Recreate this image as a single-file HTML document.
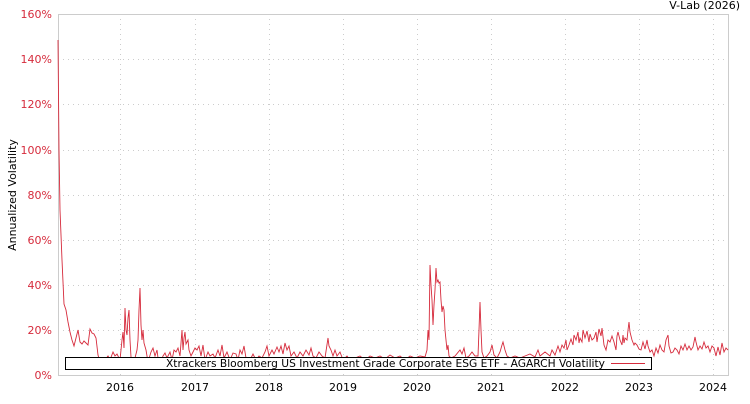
<!DOCTYPE html>
<html><head><style>
body{margin:0;background:#fff;width:750px;height:400px;overflow:hidden;font-family:"DejaVu Sans","Liberation Sans",sans-serif;}
</style></head><body>
<svg width="750" height="400" xmlns="http://www.w3.org/2000/svg" font-family="DejaVu Sans, Liberation Sans, sans-serif">
<text x="740" y="9" font-size="11" text-anchor="end" fill="#000">V-Lab (2026)</text>
<g stroke="#ccc" stroke-dasharray="1,4" stroke-width="1">
<line x1="58" x2="728" y1="59.5" y2="59.5"/><line x1="58" x2="728" y1="104.5" y2="104.5"/>
<line x1="58" x2="728" y1="150.5" y2="150.5"/><line x1="58" x2="728" y1="195.5" y2="195.5"/>
<line x1="58" x2="728" y1="240.5" y2="240.5"/><line x1="58" x2="728" y1="285.5" y2="285.5"/>
<line x1="58" x2="728" y1="330.5" y2="330.5"/>
<line x1="120.5" x2="120.5" y1="14" y2="375"/><line x1="195.5" x2="195.5" y1="14" y2="375"/>
<line x1="269.5" x2="269.5" y1="14" y2="375"/><line x1="343.5" x2="343.5" y1="14" y2="375"/>
<line x1="417.5" x2="417.5" y1="14" y2="375"/><line x1="491.5" x2="491.5" y1="14" y2="375"/>
<line x1="565.5" x2="565.5" y1="14" y2="375"/><line x1="639.5" x2="639.5" y1="14" y2="375"/>
<line x1="713.5" x2="713.5" y1="14" y2="375"/>
</g>
<rect x="58.5" y="14.5" width="670" height="361" fill="none" stroke="#ccc"/>
<g fill="#d62b3c" font-size="11" text-anchor="end">
<text x="52" y="18">160%</text><text x="52" y="63">140%</text><text x="52" y="108">120%</text>
<text x="52" y="154">100%</text><text x="52" y="199">80%</text><text x="52" y="244">60%</text>
<text x="52" y="289">40%</text><text x="52" y="334">20%</text><text x="52" y="379">0%</text>
</g>
<g fill="#000" font-size="11" text-anchor="middle">
<text x="120" y="391">2016</text><text x="195" y="391">2017</text><text x="269" y="391">2018</text>
<text x="343" y="391">2019</text><text x="417" y="391">2020</text><text x="491" y="391">2021</text>
<text x="565" y="391">2022</text><text x="639" y="391">2023</text><text x="713" y="391">2024</text>
</g>
<text transform="translate(16,195) rotate(-90)" font-size="11" text-anchor="middle" fill="#000">Annualized Volatility</text>
<polyline fill="none" stroke="#d62b3c" stroke-width="0.9" points="
58,40 59,150 60,210 61,235 62,260 64,304 66,310 68,322 70,332 72,340 74,346 76,338 78,330 80,342 82,344 84,341 86,343 88,345 90,329 92,333 94,334 96,338 98,355 100,362 105,360 108,356 110,360 113,352 115,356 117,354 120,360 122,340 123,332 124,348 125,308 126,330 127,335 128,318 129,310 130,340 131,357 134,362 137,350 138,340 139,310 140,288 141,325 142,340 143,330 144,343 146,350 148,362 151,352 153,348 155,356 157,350 158,358 160,364 163,356 165,353 167,358 170,352 172,360 174,350 176,352 178,348 180,356 182,330 183,350 184,338 185,332 186,344 188,340 189,350 191,356 193,352 195,348 197,350 199,346 201,356 203,345 205,360 208,352 210,356 213,354 215,358 218,350 220,356 222,345 224,358 227,352 230,360 233,353 236,354 238,360 240,350 242,354 244,346 246,358 250,360 253,354 256,360 259,356 262,358 265,352 267,346 269,356 272,350 274,354 277,347 279,352 281,346 283,354 285,343 287,350 289,346 291,356 294,352 297,358 300,352 303,356 306,350 309,355 311,348 313,356 316,358 319,352 322,356 325,358 328,338 329,346 331,350 333,356 335,350 337,356 340,352 343,360 347,356 350,360 355,358 360,356 365,360 370,356 375,358 380,356 385,359 390,355 395,358 400,356 405,360 410,356 415,358 420,356 425,357 427,350 428,330 429,340 430,265 431,285 432,300 433,325 434,305 435,290 436,268 437,282 438,280 439,283 440,282 441,300 442,312 443,306 444,310 445,330 446,340 447,350 448,345 449,356 451,358 455,356 460,350 462,354 464,348 466,358 469,356 472,352 475,356 478,356 479,330 480,302 481,330 482,352 484,358 487,356 490,352 492,345 494,355 497,358 500,352 502,345 503,342 505,350 507,356 510,358 515,356 520,358 525,356 530,354 535,357 538,350 540,356 545,352 550,356 552,350 555,355 558,346 560,352 562,345 564,348 566,340 567,350 569,345 571,339 573,345 574,335 576,340 578,332 579,343 580,338 582,342 583,330 585,338 587,331 589,342 590,334 592,340 594,338 596,332 597,342 599,329 601,336 602,328 604,345 606,350 608,340 610,342 612,336 614,342 616,350 617,336 618,332 620,340 622,345 623,335 624,343 625,338 627,340 628,330 629,322 630,332 632,340 634,345 635,343 637,345 639,349 641,350 643,342 645,349 647,340 648,346 650,352 652,350 654,356 656,348 658,353 660,345 662,350 664,352 666,340 668,335 669,346 671,353 673,352 675,348 677,350 679,354 681,346 683,350 685,344 687,350 689,346 691,350 693,347 695,337 696,342 698,350 700,346 702,349 704,342 706,348 708,346 710,352 712,346 714,348 716,356 718,347 720,355 722,343 724,352 726,348 728,350"/>
<rect x="65.5" y="357.5" width="586" height="12" fill="#fff" stroke="#000"/>
<text x="166" y="367" font-size="11" textLength="439" lengthAdjust="spacingAndGlyphs" fill="#000">Xtrackers Bloomberg US Investment Grade Corporate ESG ETF - AGARCH Volatility</text>
<line x1="611" x2="645" y1="363.5" y2="363.5" stroke="#d62b3c"/>
</svg>
</body></html>
